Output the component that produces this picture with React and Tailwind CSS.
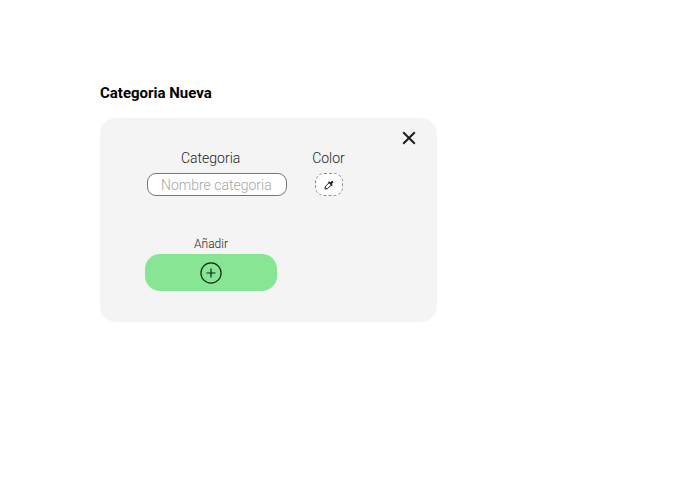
import React from "react";

function CloseIcon() {
  return (
    <svg className="block h-[14px] w-[14px]" viewBox="0 0 14 14" fill="none" stroke="#1d1d1d" strokeWidth="2">
      <path d="M1.2 1.2 12.8 12.8M12.8 1.2 1.2 12.8" />
    </svg>
  );
}

function DropperIcon() {
  return (
    <svg className="block h-[10px] w-[10px]" viewBox="0 0 20 20" fill="none" stroke="#1d1d1d" strokeWidth="2">
      <path d="M10.5 5 3 12.5 1.8 18.2 7.5 17 15 9.500" />
      <path d="M9 3.500 16.500 11" strokeWidth="2.4" />
      <path d="M12.200 6.500 15 3.200a1.600 1.600 0 0 1 2.300 2.300L13.700 8.300" fill="#1d1d1d" />
    </svg>
  );
}

function PlusCircleIcon() {
  return (
    <svg className="block h-[22px] w-[22px]" viewBox="0 0 22 22" fill="none" stroke="#10251a" strokeWidth="1.2">
      <circle cx="11" cy="11" r="10.1" />
      <path d="M11 6.500v9M6.500 11h9" />
    </svg>
  );
}

export default function App() {
  return (
    <main className="h-[482px] w-[692px] overflow-hidden bg-white pl-[100px] pt-[84px] font-['Roboto',sans-serif] text-[#1d1d1d]">
      <h1 className="h-[34px] whitespace-nowrap text-[15px] font-bold leading-[18px] text-black">Categoria Nueva</h1>
      <section className="flex h-[204px] w-[337px] flex-col rounded-[16px] bg-[#f4f4f4]">
        <div className="flex h-[31px] justify-end pr-[21px] pt-[13px]">
          <button aria-label="Cerrar" className="h-[14px] w-[14px]">
            <CloseIcon />
          </button>
        </div>
        <div className="flex pl-[47px]">
          <label className="flex w-[140px] flex-col">
            <span className="h-[24px] pl-[34px] text-[14px] font-light leading-[18px]">Categoria</span>
            <input
              placeholder="Nombre categoria"
              className="h-[23px] w-[140px] rounded-[9px] border border-[#777777] bg-white pl-[13px] text-[14px] font-light leading-[20px] placeholder:text-[#a6a6a6]"
            />
          </label>
          <div className="ml-[23px] flex w-[37px] flex-col items-center">
            <span className="h-[24px] text-[14px] font-light leading-[18px]">Color</span>
            <button aria-label="Color" className="flex h-[23px] w-[28px] items-center justify-center rounded-[9px] border border-dashed border-[#888888] bg-white">
              <DropperIcon />
            </button>
          </div>
        </div>
        <div className="mt-[40px] flex w-[132px] flex-col items-center self-start ml-[45px]">
          <span className="h-[18px] text-[12px] font-light leading-[16px]">Añadir</span>
          <button aria-label="Añadir" className="flex h-[37px] w-[132px] items-center justify-center rounded-[15px] bg-[#86e693]">
            <PlusCircleIcon />
          </button>
        </div>
      </section>
    </main>
  );
}
